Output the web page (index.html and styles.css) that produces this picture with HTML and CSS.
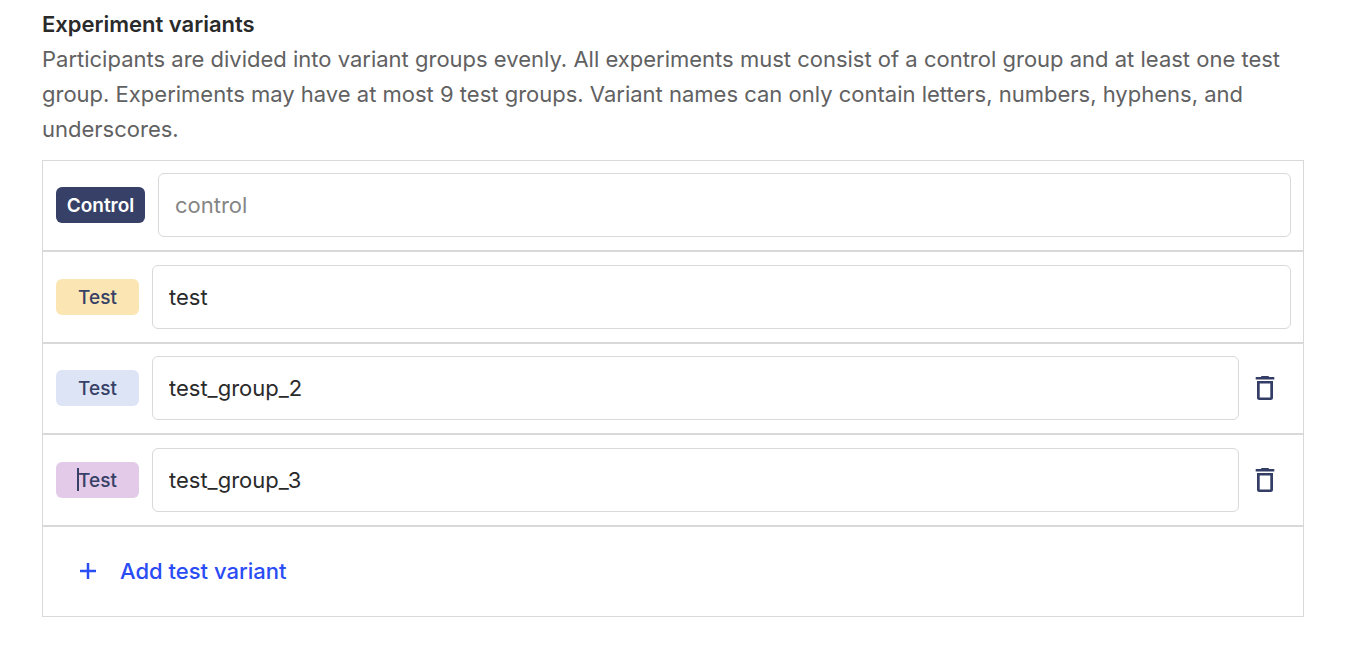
FILE: index.html
```html
<!DOCTYPE html>
<html lang="en">
<head>
<meta charset="utf-8">
<title>Experiment variants</title>
<link rel="stylesheet" href="styles.css">
</head>
<body>
<main class="section">
  <h2 class="title">Experiment variants</h2>
  <p class="description">Participants are divided into variant groups evenly. All experiments must consist of a control group and at least one test group. Experiments may have at most 9 test groups. Variant names can only contain letters, numbers, hyphens, and underscores.</p>
  <div class="variants">
    <div class="row">
      <label class="tag tag-control" for="v0">Control</label>
      <input class="field" id="v0" type="text" value="control" disabled>
    </div>
    <div class="row">
      <label class="tag tag-yellow" for="v1">Test</label>
      <input class="field" id="v1" type="text" value="test">
    </div>
    <div class="row">
      <label class="tag tag-blue" for="v2">Test</label>
      <input class="field" id="v2" type="text" value="test_group_2">
      <button class="delete" type="button" aria-label="Delete test_group_2">
        <svg class="trash" viewBox="0 0 20 26" aria-hidden="true"><path d="M.7 2H5.700L6.700 1H13.300L14.300 2H19.300V4.500H.7Z"/><path fill-rule="evenodd" d="M2 6H18V22.500Q18 25 15.500 25H4.500Q2 25 2 22.500ZM4.700 8.500V22.500H15.300V8.500Z"/></svg>
      </button>
    </div>
    <div class="row">
      <label class="tag tag-purple" for="v3"><span class="caret"></span>Test</label>
      <input class="field" id="v3" type="text" value="test_group_3">
      <button class="delete" type="button" aria-label="Delete test_group_3">
        <svg class="trash" viewBox="0 0 20 26" aria-hidden="true"><path d="M.7 2H5.700L6.700 1H13.300L14.300 2H19.300V4.500H.7Z"/><path fill-rule="evenodd" d="M2 6H18V22.500Q18 25 15.500 25H4.500Q2 25 2 22.500ZM4.700 8.500V22.500H15.300V8.500Z"/></svg>
      </button>
    </div>
    <div class="row row-add">
      <button class="add" type="button">
        <svg class="plus" viewBox="0 0 18 18" aria-hidden="true"><path d="M9 1V17M1 9H17"/></svg>
        Add test variant
      </button>
    </div>
  </div>
</main>
</body>
</html>
```

FILE: styles.css
```css
* { box-sizing: border-box; }
body { margin: 0; background: #fff; color: #2a2a2b; font-family: Inter, "Liberation Sans", sans-serif; }
.section { padding: 6px 58px 48px 42px; }
.title { margin: 0; font-size: 22px; line-height: 36px; font-weight: 600; }
.description { margin: 0 0 13px; font-size: 22px; line-height: 35px; color: #616162; }
.variants { border: 1px solid #d9d9d9; }
.row { display: flex; align-items: center; gap: 13px; padding: 12px 12px 13px 13px; border-bottom: 2px solid #d9d9d9; }
.row:nth-child(even) { padding-top: 13px; }
.row-add { border-bottom: 0; }
.tag { position: relative; flex: none; width: 83px; height: 36px; border-radius: 6px; font-size: 19px; line-height: 37px; font-weight: 500; text-align: center; color: #374066; }
.tag-control { width: 89px; background: #374066; color: #fff; font-weight: 600; }
.tag-yellow { background: #fbe6b3; }
.tag-blue { background: #dde4f6; }
.tag-purple { background: #e2cae8; }
.caret { position: absolute; left: 21px; top: 6px; width: 2px; height: 23px; background: #374066; }
.field { flex: 1; min-width: 0; height: 64px; padding: 0 16px; border: 1px solid #d9d9d9; border-radius: 6px; background: #fff; color: #2a2a2b; font: inherit; font-size: 22px; }
.field:disabled { color: #858585; }
.delete { display: flex; align-items: center; justify-content: center; width: 26px; height: 40px; margin-right: 13px; padding: 0; border: 0; background: none; color: #343d66; }
.trash { width: 20px; height: 26px; fill: currentColor; }
.add { display: flex; align-items: center; gap: 23px; height: 64px; padding: 0 23px; border: 0; background: none; color: #2a4cf5; font: inherit; font-size: 22px; font-weight: 500; }
.plus { width: 18px; height: 18px; fill: none; stroke: currentColor; stroke-width: 2.5; }
```
